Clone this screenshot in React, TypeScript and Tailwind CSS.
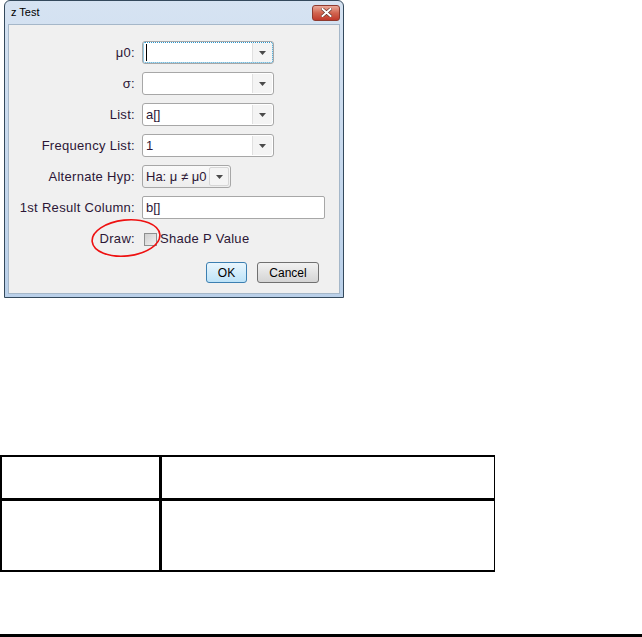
import React from "react"

const font = { fontFamily: '"Liberation Sans", Arial, sans-serif' }

function Arrow() {
  return (
    <svg width="7" height="4" viewBox="0 0 7 4">
      <path d="M0 0 L7 0 L3.5 4 Z" fill="#4a4a4a" />
    </svg>
  )
}

function Label({ children }: { children: React.ReactNode }) {
  return (
    <div className="w-[127px] shrink-0 pr-[1px] text-right text-[13px] tracking-[0.3px] text-[#2c1636]">{children}</div>
  )
}

function Combo({ value, focused, width = 132 }: { value?: string; focused?: boolean; width?: number }) {
  return (
    <div
      className="relative flex h-[23px] rounded-[3px] border border-[#a7a7a7] bg-white"
      style={{ width }}
    >
      {focused && (
        <div className="pointer-events-none absolute inset-0 rounded-[2px] border border-dotted border-[#2a97cc]" />
      )}
      <div className="flex flex-1 items-center pl-[3px] text-[13px] text-[#2c1636]">
        {focused && <div className="h-[17px] w-[1px] bg-black" />}
        {value}
      </div>
      <div className="my-[1px] mr-[1px] flex w-[20px] items-center justify-center rounded-r-[2px] border-l border-[#e0e0e0] bg-[#f4f4f4]">
        <Arrow />
      </div>
    </div>
  )
}

function Row({ label, children }: { label: string; children: React.ReactNode }) {
  return (
    <div className="flex h-[23px] items-center gap-[6px]">
      <Label>{label}</Label>
      {children}
    </div>
  )
}

export default function App() {
  return (
    <div className="relative h-[637px] w-[642px] overflow-hidden bg-white" style={font}>
      {/* dialog */}
      <div className="ml-[4px] flex h-[298px] w-[340px] flex-col rounded-t-[6px] border border-[#34495c] bg-gradient-to-b from-[#d6e3f2] to-[#bad0e9]">
        <div className="flex h-[23px] shrink-0 items-center justify-between pl-[6px] pr-[3px]">
          <span className="text-[11px] text-black">z Test</span>
          <div className="flex h-[16px] w-[28px] items-center justify-center rounded-[3px] border border-[#8e3a2f] bg-gradient-to-b from-[#e9a99a] via-[#d1644f] to-[#c0392b]">
            <svg width="11" height="9" viewBox="0 0 11 9">
              <path d="M1.5 1 L9.5 8 M9.5 1 L1.5 8" stroke="#5a2a22" strokeWidth="3.2" strokeLinecap="square" />
              <path d="M1.5 1 L9.5 8 M9.5 1 L1.5 8" stroke="#ffffff" strokeWidth="2" strokeLinecap="square" />
            </svg>
          </div>
        </div>
        <div className="mx-[3px] mb-[3px] flex flex-1 flex-col border border-[#a5b7c9] bg-[#f0f0f0] pt-[16px]">
          <div className="flex flex-col gap-[8px]">
            <Row label="μ0:">
              <Combo focused />
            </Row>
            <Row label="σ:">
              <Combo />
            </Row>
            <Row label="List:">
              <Combo value="a[]" />
            </Row>
            <Row label="Frequency List:">
              <Combo value="1" />
            </Row>
            <Row label="Alternate Hyp:">
              <div className="flex h-[23px] w-[89px] rounded-[3px] border border-[#a7a7a7] bg-gradient-to-b from-[#fafafa] to-[#ededed]">
                <div className="flex flex-1 items-center pl-[3px] text-[13px] text-[#2c1636]">Ha: μ ≠ μ0</div>
                <div className="my-[1px] mr-[1px] flex w-[20px] items-center justify-center rounded-[2px] border border-[#d6d6d6] bg-[#f4f4f4]">
                  <Arrow />
                </div>
              </div>
            </Row>
            <div className="flex h-[23px] items-center gap-[6px]">
              <Label>1st Result Column:</Label>
              <div className="flex h-[23px] w-[183px] items-center rounded-[2px] border border-[#a7a7a7] bg-white pl-[3px] text-[13px] text-[#2c1636]">
                b[]
              </div>
            </div>
          </div>
          <div className="mt-[13px] flex h-[14px] items-center gap-[8px]">
            <Label>Draw:</Label>
            <div className="flex items-center gap-[3px]">
              <div className="h-[13px] w-[13px] border border-[#8e8f8f] bg-gradient-to-br from-[#cfcfcf] to-[#f2f2f2] p-[2px]">
                <div className="h-full w-full bg-gradient-to-br from-[#d4d4d4] to-[#ececec]" />
              </div>
              <span className="text-[13px] tracking-[0.3px] text-[#2c1636]">Shade P Value</span>
            </div>
          </div>
          <div className="mt-[16px] flex justify-end gap-[10px] pr-[20px]">
            <div className="flex h-[21px] w-[41px] items-center justify-center rounded-[3px] border border-[#3c7fb1] bg-gradient-to-b from-[#eaf6fd] to-[#bde3f8] text-[12px] text-black">
              OK
            </div>
            <div className="flex h-[21px] w-[62px] items-center justify-center rounded-[3px] border border-[#707070] bg-gradient-to-b from-[#f2f2f2] to-[#d4d4d4] text-[12px] text-black">
              Cancel
            </div>
          </div>
        </div>
      </div>

      {/* red annotation */}
      <svg className="pointer-events-none absolute left-0 top-0" width="200" height="280">
        <ellipse cx="126" cy="238" rx="34" ry="18" fill="none" stroke="#ee1111" strokeWidth="1.6" transform="rotate(-6 126 238)" />
      </svg>

      {/* table */}
      <div className="mt-[157px] grid w-[495px] grid-cols-[160px_1fr] border-2 border-r border-black">
        <div className="h-[44px] border-r-[3px] border-b-[3px] border-black" />
        <div className="h-[44px] border-b-[3px] border-black" />
        <div className="h-[69px] border-r-[3px] border-black" />
        <div className="h-[69px]" />
      </div>

      <div className="mt-[62px] h-[3px] w-full bg-black" />
    </div>
  )
}
